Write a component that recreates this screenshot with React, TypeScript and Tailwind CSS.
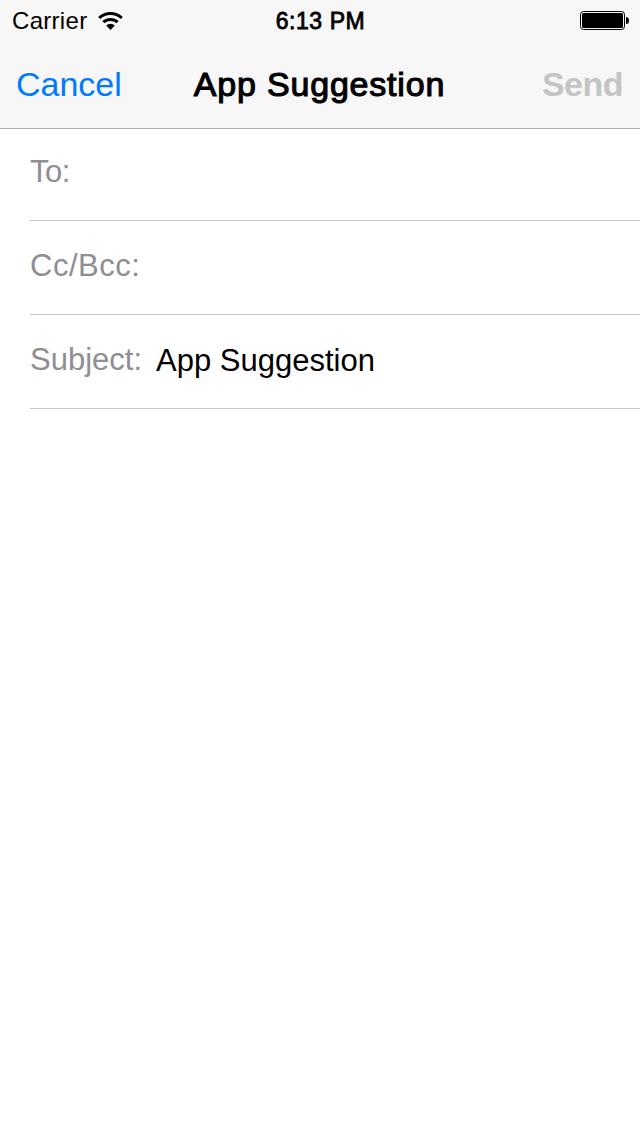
interface FieldRowProps {
  label: string;
  value?: string;
  /** Row height and padding, divider included */
  className: string;
  /** Letter spacing of the label */
  labelClassName?: string;
}

function WifiIcon() {
  return (
    <svg className="ml-[11px] h-[18px] w-[25px]" viewBox="0 0 25 18">
      <g fill="none" stroke="currentColor" strokeWidth={3}>
        <path d="M1.2 6a16.5 16.5 0 0 1 22.6 0" />
        <path d="M5.4 10.2a10.4 10.4 0 0 1 14.2 0" />
      </g>
      <path d="M12.5 18L8.2 13.6a6.2 6.2 0 0 1 8.6 0z" />
    </svg>
  );
}

function BatteryIcon() {
  return (
    <svg className="mb-[2px] h-[19px] w-[49px]" viewBox="0 0 49 19">
      <rect x="0.5" y="0.5" width="44" height="18" rx="3" fill="none" stroke="black" />
      <rect x="2" y="2" width="41" height="15" rx="1.5" />
      <path d="M46 6a3 3.5 0 0 1 3 3.5a3 3.5 0 0 1-3 3.5z" />
    </svg>
  );
}

function StatusBar() {
  return (
    <div className="flex h-10 items-center justify-between pt-[2px] pr-[11px] pl-3">
      <div className="flex flex-1 items-center text-[24px] tracking-[0.3px]">
        <span>Carrier</span>
        <WifiIcon />
      </div>
      <span className="text-[23px] tracking-[0.55px] [-webkit-text-stroke:0.8px]">6:13 PM</span>
      <div className="flex flex-1 justify-end">
        <BatteryIcon />
      </div>
    </div>
  );
}

function FieldRow({ label, value, className, labelClassName = '' }: FieldRowProps) {
  return (
    <div className={`flex items-center border-b border-[#c8c7cc] text-[31px] ${className}`}>
      <span className={`text-[#8e8e93] ${labelClassName}`}>{label}</span>
      {value && <span className="ml-[14px] pt-[2px]">{value}</span>}
    </div>
  );
}

export default function App() {
  return (
    <div className="min-h-[1136px] w-[640px] bg-white font-['Liberation_Sans',sans-serif] text-black">
      <header className="h-[129px] border-b border-[#b2b2b2] bg-[#f7f7f7]">
        <StatusBar />
        <nav className="flex h-[88px] items-center justify-between pr-[17px] pl-4 text-[34px]">
          <button type="button" className="flex-1 text-left text-[#007aff]">Cancel</button>
          <h1 className="tracking-[0.8px] [-webkit-text-stroke:1.1px]">App Suggestion</h1>
          <button type="button" className="flex-1 text-right font-semibold tracking-[-0.5px] text-[#c4c4c4]" disabled>
            Send
          </button>
        </nav>
      </header>
      <main className="pl-[30px]">
        <FieldRow label="To:" className="h-[92px] pb-[4px]" labelClassName="tracking-[-0.5px]" />
        <FieldRow label="Cc/Bcc:" className="h-[94px] pb-[2px]" labelClassName="tracking-[0.5px]" />
        <FieldRow label="Subject:" value="App Suggestion" className="h-[94px] pb-[2px]" />
      </main>
    </div>
  );
}
